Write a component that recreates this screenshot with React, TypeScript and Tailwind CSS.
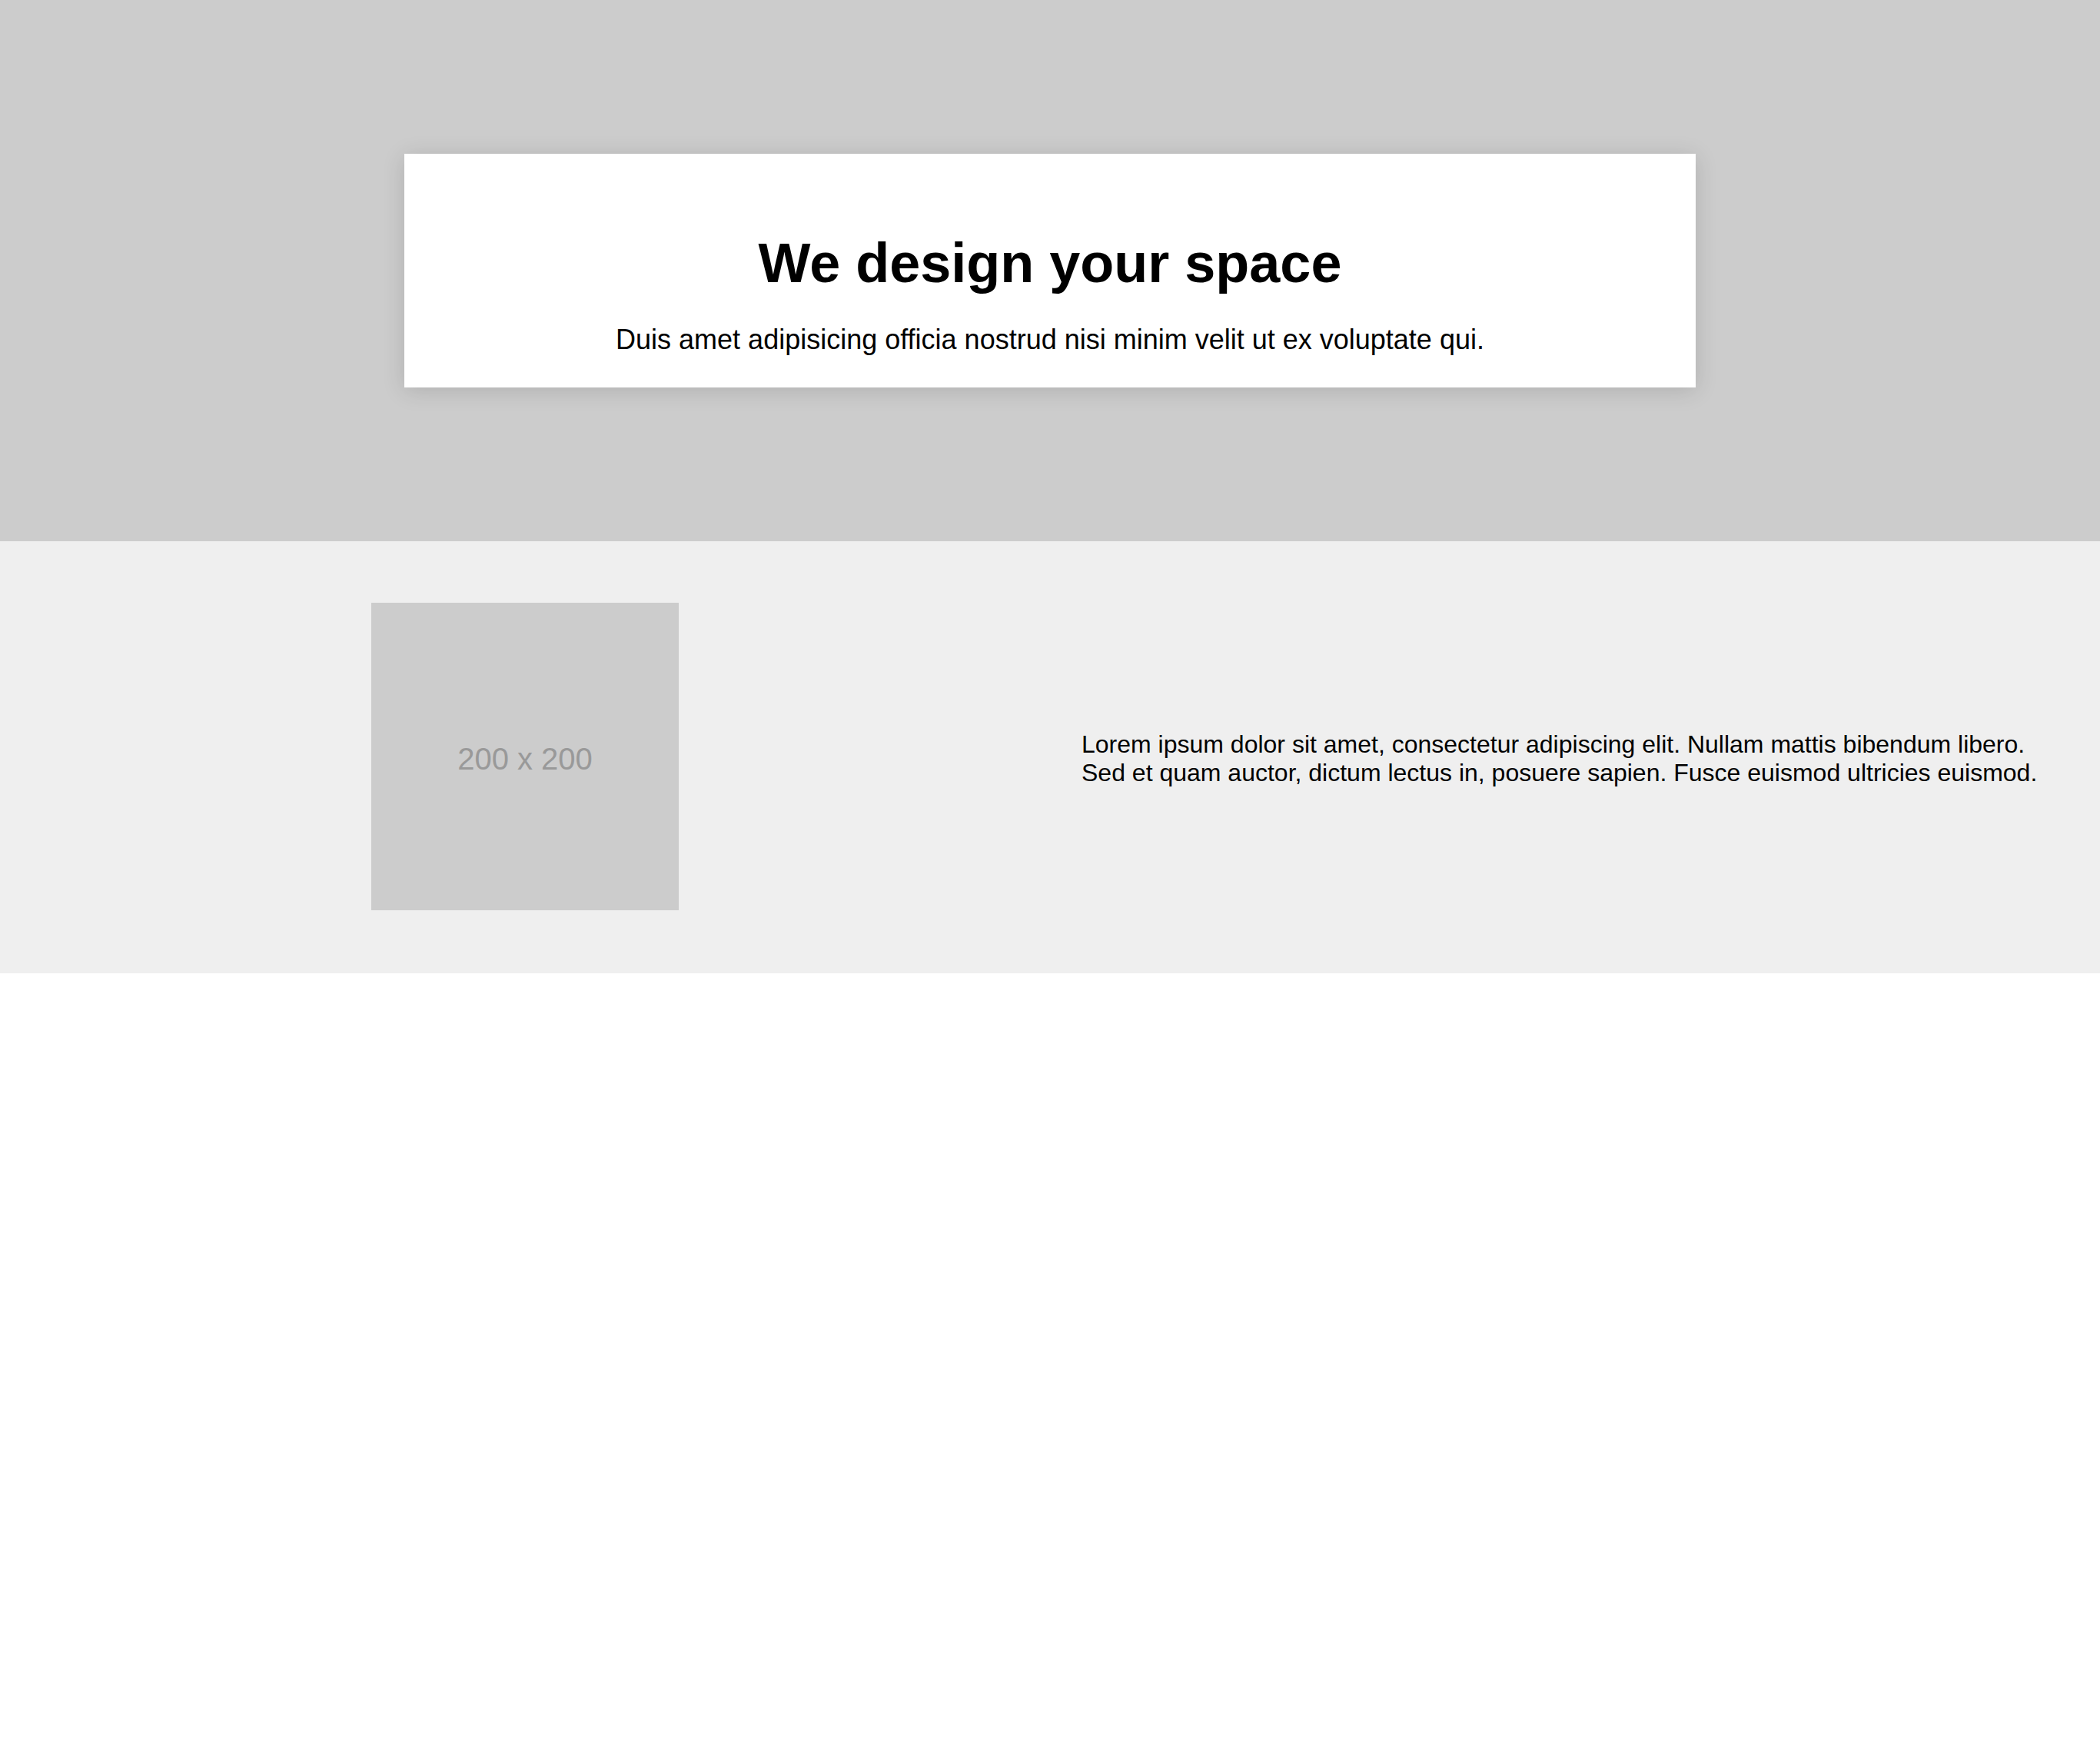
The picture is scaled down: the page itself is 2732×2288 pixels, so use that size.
export default function App() {
  return (
    <div className="min-h-[2288px] bg-white text-black font-['Liberation_Sans',Arial,sans-serif]">
      <section className="h-[704px] bg-[#cccccc] flex items-center justify-center">
        <div className="w-[1680px] bg-white shadow-[0_4px_28px_rgba(0,0,0,0.14)] pt-[101px] pb-[41px] flex flex-col items-center text-center">
          <h1 className="text-[72px] leading-[82px] font-bold">We design your space</h1>
          <p className="mt-[38px] text-[36px] leading-[42px]">
            Duis amet adipisicing officia nostrud nisi minim velit ut ex voluptate qui.
          </p>
        </div>
      </section>

      <section className="bg-[#efefef] pt-[80px] pb-[82px] grid grid-cols-2 items-center">
        <div className="flex justify-center">
          <div className="w-[400px] h-[400px] bg-[#cccccc] flex items-center justify-center pt-[6px]">
            <span className="text-[40px] text-[#999999]">200 x 200</span>
          </div>
        </div>
        <div className="px-[41px] pt-[6px]">
          <p className="text-[32px] leading-[37px]">
            Lorem ipsum dolor sit amet, consectetur adipiscing elit. Nullam mattis bibendum libero.
            Sed et quam auctor, dictum lectus in, posuere sapien. Fusce euismod ultricies euismod.
          </p>
        </div>
      </section>
    </div>
  );
}
